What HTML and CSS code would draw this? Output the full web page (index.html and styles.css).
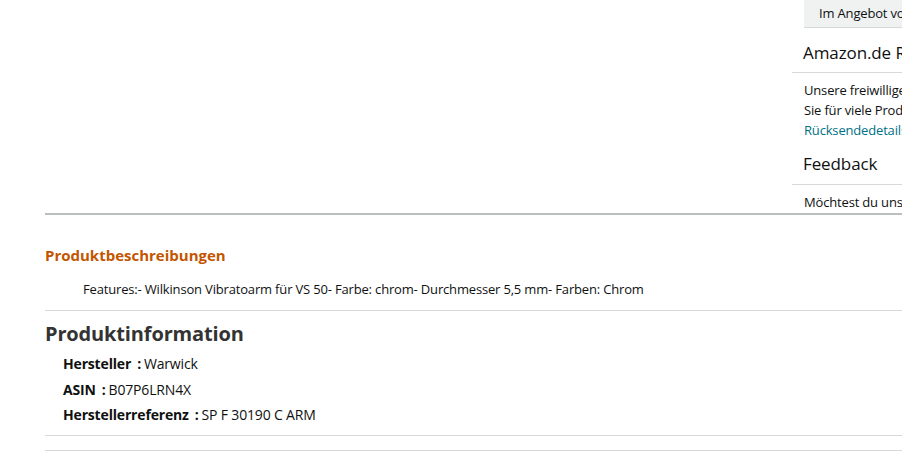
FILE: index.html
```html
<!DOCTYPE html>
<html lang="de">
<head>
<meta charset="utf-8">
<link rel="stylesheet" href="styles.css">
</head>
<body>
<div class="page">
  <div class="top">
    <div class="spacer"></div>
    <aside class="side">
      <div class="offer">Im Angebot von Amazon.de</div>
      <h3 class="side-title">Amazon.de Rückgaberichtlinien</h3>
      <div class="side-sep"></div>
      <p class="side-text">Unsere freiwillige Rückgabegarantie: Innerhalb von 30 Tagen</p>
      <p class="side-text">Sie für viele Produkte ein erweitertes Rückgaberecht</p>
      <a class="side-link" href="#">Rücksendedetails anzeigen</a>
      <h3 class="side-title fb">Feedback</h3>
      <div class="side-sep sep2"></div>
      <p class="side-text">Möchtest du uns über einen günstigeren Preis informieren?</p>
    </aside>
  </div>
  <div class="thick"></div>
  <section class="desc">
    <h2 class="desc-title">Produktbeschreibungen</h2>
    <p class="desc-text">Features:- Wilkinson Vibratoarm für VS 50- Farbe: chrom- Durchmesser 5,5 mm- Farben: Chrom</p>
  </section>
  <div class="thin"></div>
  <section class="info">
    <h2 class="info-title">Produktinformation</h2>
    <ul class="info-list">
      <li><span class="lbl">Hersteller</span><span class="colon">:</span>Warwick</li>
      <li><span class="lbl">ASIN</span><span class="colon">:</span>B07P6LRN4X</li>
      <li><span class="lbl">Herstellerreferenz</span><span class="colon">:</span>SP F 30190 C ARM</li>
    </ul>
  </section>
  <div class="thin"></div>
  <div class="gap"></div>
  <div class="thin"></div>
</div>
</body>
</html>
```
FILE: styles.css
```css
html, body {
  margin: 0;
  padding: 0;
  background: #fff;
  overflow: hidden;
}
body {
  font-family: "Open Sans", "Liberation Sans", Arial, sans-serif;
  font-size: 13px;
  letter-spacing: -0.17px;
  color: #0f1111;
  width: 902px;
  height: 472px;
}
.page {
  padding-left: 45px;
}
.top {
  display: flex;
  height: 213px;
}
.spacer {
  width: 747px;
  flex: none;
}
.side {
  width: 155px;
  flex: none;
  white-space: nowrap;
  overflow: hidden;
}
.offer {
  margin-left: 12px;
  height: 27px;
  line-height: 26px;
  background: #f0f2f2;
  border-bottom: 1px solid #d5d9d9;
  padding-left: 15px;
  color: #0f1111;
}
.side-title {
  margin: 0;
  padding-left: 11px;
  font-weight: 400;
  font-size: 17px;
  letter-spacing: -0.1px;
  line-height: 24px;
  margin-top: 13px;
}
.side-title.fb {
  margin-top: 12px;
}
.side-sep {
  height: 1px;
  background: #d5d9d9;
  margin-top: 7px;
  margin-bottom: 7px;
}
.side-sep.sep2 {
  margin-top: 8px;
}
.side-text {
  margin: 0;
  padding-left: 12px;
  line-height: 20px;
}
.side-link {
  display: block;
  padding-left: 12px;
  line-height: 20px;
  color: #007185;
  text-decoration: none;
}
.thick {
  height: 2px;
  background: #bbbfbf;
}
.desc {
  padding-top: 30px;
  padding-bottom: 11px;
}
.desc-title {
  margin: 0;
  color: #c45500;
  font-size: 15px;
  font-weight: 700;
  letter-spacing: 0;
  line-height: 20px;
}
.desc-text {
  margin: 14px 0 0 38px;
  line-height: 20px;
}
.thin {
  height: 1px;
  background: #d5d9d9;
}
.info {
  padding-top: 9px;
  padding-bottom: 10px;
}
.info-title {
  margin: 0;
  font-size: 20px;
  font-weight: 700;
  letter-spacing: -0.15px;
  line-height: 28px;
  color: #333;
}
.info-list {
  list-style: none;
  margin: 6px 0 0 18px;
  padding: 0;
  font-size: 14px;
}
.info-list li {
  line-height: 20px;
  margin-bottom: 5.5px;
}
.info-list li:last-child {
  margin-bottom: 0;
}
.lbl {
  font-weight: 700;
  margin-right: 6px;
}
.colon {
  font-weight: 700;
  margin-right: 3px;
}
.gap {
  height: 14px;
}
```
